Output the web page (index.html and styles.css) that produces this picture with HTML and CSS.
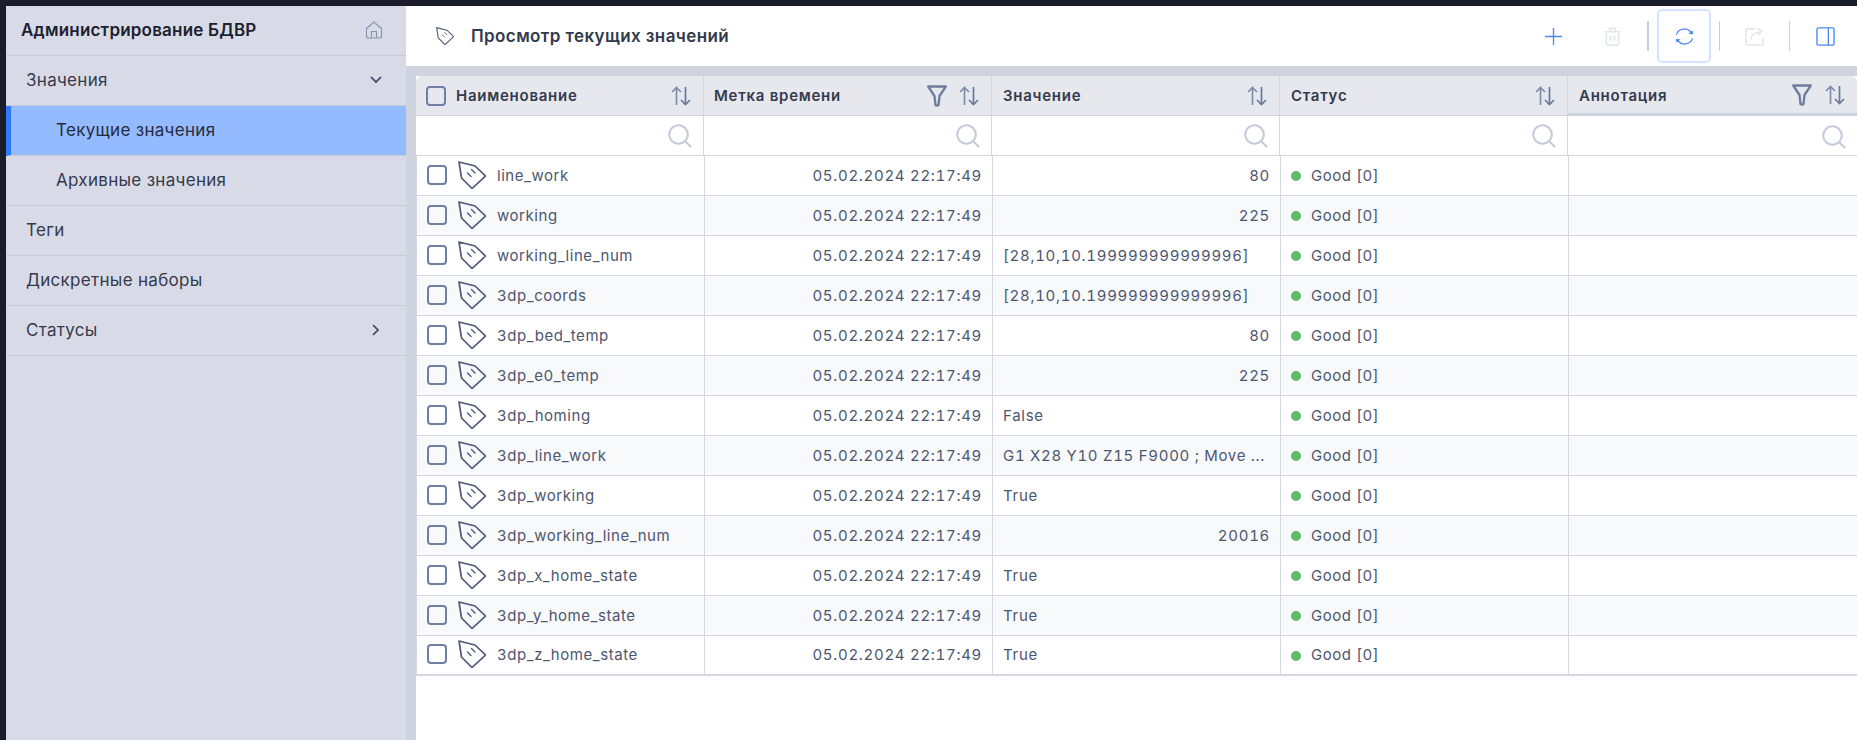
FILE: index.html
```html
<!DOCTYPE html>
<html lang="ru">
<head>
<meta charset="utf-8">
<title>Просмотр текущих значений</title>
<link rel="stylesheet" href="styles.css">
</head>
<body>
<svg class="defs" width="0" height="0" aria-hidden="true">
  <symbol id="tag" viewBox="0 0 28 28"><path d="M1 1 L17 5 L27.500 15 L14 27.500 L3.500 17 Z" fill="none" stroke="currentColor" stroke-width="1.700" stroke-linejoin="round"/><path d="M9.500 12 L13 15.500 M13.500 8.500 L17 12" fill="none" stroke="currentColor" stroke-width="1.400" stroke-linecap="round"/></symbol>
  <symbol id="sort" viewBox="0 0 20 20"><path d="M5.500 19 V1.500 M1 6 L5.500 1.500 L10 6" fill="none" stroke="#7e8cab" stroke-width="1.700"/><path d="M14.500 1 V18.500 M10 14 L14.500 18.500 L19 14" fill="none" stroke="#6a7a9c" stroke-width="1.700"/></symbol>
  <symbol id="search" viewBox="0 0 24 24"><circle cx="10.500" cy="10.500" r="9.300" fill="none" stroke="#c2c9dc" stroke-width="2"/><path d="M17 17 L23 23" stroke="#c2c9dc" stroke-width="2"/></symbol>
  <symbol id="funnel" viewBox="0 0 20 22"><path d="M1.200 1.500 H18.800 L12.500 11 L11.500 20 Q10 21 8.500 20 L7.500 11 Z" fill="none" stroke="#6f7c9b" stroke-width="2.300" stroke-linejoin="round"/></symbol>
</svg>
<div class="app">
  <aside class="sidebar">
    <div class="brand">
      <span class="brand-title">Администрирование БДВР</span>
      <svg class="home" viewBox="0 0 18 18"><path d="M1.500 7.500 L9 1 L16.500 7.500 V15 Q16.500 17 14.500 17 H3.500 Q1.500 17 1.500 15 Z M6.500 17 V10.500 H11.500 V17" fill="none" stroke="#8b93a8" stroke-width="1.100"/></svg>
    </div>
    <div class="nav-item"><span>Значения</span><svg class="chev" viewBox="0 0 12 8"><path d="M1 1 L6 6 L11 1" fill="none" stroke="#3f465a" stroke-width="1.700"/></svg></div>
    <div class="nav-item sub active"><span>Текущие значения</span></div>
    <div class="nav-item sub"><span>Архивные значения</span></div>
    <div class="nav-item"><span>Теги</span></div>
    <div class="nav-item"><span>Дискретные наборы</span></div>
    <div class="nav-item"><span>Статусы</span><svg class="chev right" viewBox="0 0 8 12"><path d="M1 1 L6 6 L1 11" fill="none" stroke="#3f465a" stroke-width="1.700"/></svg></div>
  </aside>
  <main class="main">
    <header class="topbar">
      <svg class="page-icon"><use href="#tag"/></svg>
      <h1 class="page-title">Просмотр текущих значений</h1>
      <div class="tools">
        <button class="tool t-add"><svg viewBox="0 0 20 20"><path d="M10 1 V19 M1 10 H19" stroke="#4c86f5" stroke-width="1.400"/></svg></button>
        <button class="tool t-del"><svg viewBox="0 0 20 20"><path d="M1.500 5 H18.500 M7 5 V1.500 H13 V5 M3.500 5 V17 Q3.500 19 5.500 19 H14.500 Q16.500 19 16.500 17 V5 M8 9 V14.500 M12 9 V14.500" fill="none" stroke="#e3e6ed" stroke-width="1.800"/></svg></button>
        <span class="sep thick"></span>
        <button class="tool t-refresh"><svg viewBox="0 0 20 20"><path d="M1.500 8 A8.700 8.700 0 0 1 17 6 M18.500 12 A8.700 8.700 0 0 1 3 14" fill="none" stroke="#4c86f5" stroke-width="1.300"/><path d="M14 7 L19 7.500 L18.500 3.500 Z M6 13 L1 12.500 L1.500 16.500 Z" fill="#4c86f5"/></svg></button>
        <span class="sep"></span>
        <button class="tool t-share"><svg viewBox="0 0 20 20"><path d="M10 2 H3 Q1 2 1 4 V17 Q1 19 3 19 H17 Q19 19 19 17 V11 M6 13 Q7 6 15 5.500 M12.500 1.500 L17.500 4.500 L13.500 9" fill="none" stroke="#e3e6ed" stroke-width="1.700"/></svg></button>
        <span class="sep"></span>
        <button class="tool t-panel"><svg viewBox="0 0 20 20"><rect x="1" y="1" width="18" height="18" rx="1.500" fill="none" stroke="#4c86f5" stroke-width="1.400"/><path d="M13 1 V19" stroke="#4c86f5" stroke-width="1.400"/></svg></button>
      </div>
    </header>
    <section class="content">
      <div class="table">
        <div class="thead">
          <div class="th"><span class="box head-box"></span><span class="th-label">Наименование</span><svg class="sort"><use href="#sort"/></svg></div>
          <div class="th"><span class="th-label">Метка времени</span><svg class="funnel"><use href="#funnel"/></svg><svg class="sort"><use href="#sort"/></svg></div>
          <div class="th"><span class="th-label">Значение</span><svg class="sort"><use href="#sort"/></svg></div>
          <div class="th"><span class="th-label">Статус</span><svg class="sort"><use href="#sort"/></svg></div>
          <div class="th"><span class="th-label">Аннотация</span><svg class="funnel"><use href="#funnel"/></svg><svg class="sort"><use href="#sort"/></svg></div>
        </div>
        <div class="tfilter">
          <div class="tf"><svg class="search"><use href="#search"/></svg></div>
          <div class="tf"><svg class="search"><use href="#search"/></svg></div>
          <div class="tf"><svg class="search"><use href="#search"/></svg></div>
          <div class="tf"><svg class="search"><use href="#search"/></svg></div>
          <div class="tf"><svg class="search"><use href="#search"/></svg></div>
        </div>
        <div class="row"><div class="td name"><span class="box"></span><svg class="tag"><use href="#tag"/></svg><span>line_work</span></div><div class="td num">05.02.2024 22:17:49</div><div class="td num">80</div><div class="td status"><i class="dot"></i>Good [0]</div><div class="td"></div></div>
        <div class="row"><div class="td name"><span class="box"></span><svg class="tag"><use href="#tag"/></svg><span>working</span></div><div class="td num">05.02.2024 22:17:49</div><div class="td num">225</div><div class="td status"><i class="dot"></i>Good [0]</div><div class="td"></div></div>
        <div class="row"><div class="td name"><span class="box"></span><svg class="tag"><use href="#tag"/></svg><span>working_line_num</span></div><div class="td num">05.02.2024 22:17:49</div><div class="td">[28,10,10.199999999999996]</div><div class="td status"><i class="dot"></i>Good [0]</div><div class="td"></div></div>
        <div class="row"><div class="td name"><span class="box"></span><svg class="tag"><use href="#tag"/></svg><span>3dp_coords</span></div><div class="td num">05.02.2024 22:17:49</div><div class="td">[28,10,10.199999999999996]</div><div class="td status"><i class="dot"></i>Good [0]</div><div class="td"></div></div>
        <div class="row"><div class="td name"><span class="box"></span><svg class="tag"><use href="#tag"/></svg><span>3dp_bed_temp</span></div><div class="td num">05.02.2024 22:17:49</div><div class="td num">80</div><div class="td status"><i class="dot"></i>Good [0]</div><div class="td"></div></div>
        <div class="row"><div class="td name"><span class="box"></span><svg class="tag"><use href="#tag"/></svg><span>3dp_e0_temp</span></div><div class="td num">05.02.2024 22:17:49</div><div class="td num">225</div><div class="td status"><i class="dot"></i>Good [0]</div><div class="td"></div></div>
        <div class="row"><div class="td name"><span class="box"></span><svg class="tag"><use href="#tag"/></svg><span>3dp_homing</span></div><div class="td num">05.02.2024 22:17:49</div><div class="td">False</div><div class="td status"><i class="dot"></i>Good [0]</div><div class="td"></div></div>
        <div class="row"><div class="td name"><span class="box"></span><svg class="tag"><use href="#tag"/></svg><span>3dp_line_work</span></div><div class="td num">05.02.2024 22:17:49</div><div class="td">G1 X28 Y10 Z15 F9000 ; Move ...</div><div class="td status"><i class="dot"></i>Good [0]</div><div class="td"></div></div>
        <div class="row"><div class="td name"><span class="box"></span><svg class="tag"><use href="#tag"/></svg><span>3dp_working</span></div><div class="td num">05.02.2024 22:17:49</div><div class="td">True</div><div class="td status"><i class="dot"></i>Good [0]</div><div class="td"></div></div>
        <div class="row"><div class="td name"><span class="box"></span><svg class="tag"><use href="#tag"/></svg><span>3dp_working_line_num</span></div><div class="td num">05.02.2024 22:17:49</div><div class="td num">20016</div><div class="td status"><i class="dot"></i>Good [0]</div><div class="td"></div></div>
        <div class="row"><div class="td name"><span class="box"></span><svg class="tag"><use href="#tag"/></svg><span>3dp_x_home_state</span></div><div class="td num">05.02.2024 22:17:49</div><div class="td">True</div><div class="td status"><i class="dot"></i>Good [0]</div><div class="td"></div></div>
        <div class="row"><div class="td name"><span class="box"></span><svg class="tag"><use href="#tag"/></svg><span>3dp_y_home_state</span></div><div class="td num">05.02.2024 22:17:49</div><div class="td">True</div><div class="td status"><i class="dot"></i>Good [0]</div><div class="td"></div></div>
        <div class="row last"><div class="td name"><span class="box"></span><svg class="tag"><use href="#tag"/></svg><span>3dp_z_home_state</span></div><div class="td num">05.02.2024 22:17:49</div><div class="td">True</div><div class="td status"><i class="dot"></i>Good [0]</div><div class="td"></div></div>
      </div>
    </section>
  </main>
</div>
</body>
</html>
```
FILE: styles.css
```css
* { box-sizing: border-box; }
html, body { margin: 0; height: 100%; overflow: hidden; }
body { background: #1a1d29; font-family: Inter, "Noto Sans", sans-serif; padding: 6px 0 0 6px; height: 740px; }
.defs { position: absolute; }
.app { display: flex; height: 734px; }

.sidebar { width: 400px; flex: none; background: #d8dbe7; }
.brand { height: 50px; display: flex; align-items: center; justify-content: space-between; padding: 0 23px 2px 15px; border-bottom: 1px solid #c5c9d8; }
.brand-title { font-size: 17px; letter-spacing: .2px; font-weight: 600; color: #1c2130; }
.home { width: 18px; height: 18px; }
.nav-item { height: 50px; display: flex; align-items: center; justify-content: space-between; padding: 0 24px 2px 20px; border-bottom: 1px solid #c5c9d8; font-size: 17px; letter-spacing: .3px; color: #343a4d; }
.nav-item.sub { padding-left: 50px; }
.nav-item.active { background: #94bbff; border-left: 5px solid #2f7bff; padding-left: 45px; color: #262c40; }
.chev { width: 12px; height: 8px; }
.chev.right { width: 8px; height: 12px; margin-right: 2px; }

.main { flex: 1; display: flex; flex-direction: column; min-width: 0; background: #fff; }
.topbar { height: 60px; flex: none; display: flex; align-items: center; padding: 0 0 0 30px; }
.page-icon { width: 18px; height: 18px; color: #4f5a78; margin-top: -1px; flex: none; }
.page-title { margin: 0 0 0 17px; font-size: 17px; letter-spacing: .4px; font-weight: 600; color: #343a4d; }
.tools { margin-left: auto; display: flex; align-items: center; padding-right: 22px; }
.tool { border: 0; background: none; padding: 0; display: flex; align-items: center; justify-content: center; }
.tool svg { width: 19px; height: 19px; display: block; }
.t-add { margin-right: 40px; }
.t-del { margin-right: 25px; }
.t-refresh { width: 54px; height: 54px; border: 2px solid #d4e3ff; border-radius: 5px; margin: 0 8px 0 8px; }
.t-share { margin: 0 25px 0 25px; }
.t-panel { margin-left: 26px; }
.sep { width: 1px; height: 30px; background: #cbcfdb; }
.sep.thick { width: 2px; }

.content { flex: 1; background: #fff; border-top: 10px solid #cfd3de; border-left: 10px solid #cfd3de; }
.table { display: block; }
.thead, .tfilter, .row { display: grid; grid-template-columns: 288px 288px 288px 288px 1fr; }
.thead { height: 40px; border-bottom: 1px solid #cdd1de; background: #e6e8ee; border-radius: 6px 6px 0 0; }
.th { display: flex; align-items: center; padding: 0 12px 0 10px; border-right: 1px solid #d4d8e3; gap: 12px; font-size: 15px; letter-spacing: .75px; font-weight: 600; color: #343a4d; }
.th:first-child { padding-left: 10px; gap: 0; }
.th:nth-child(3), .th:nth-child(4) { padding-left: 11px; }
.th:last-child { border-right: 0; border-bottom: 2px solid #cdd1de; padding: 1px 12px 0 11px; gap: 13px; }
.th-label { margin-right: auto; }
.head-box { margin-right: 10px; }
.sort { width: 20px; height: 20px; flex: none; }
.funnel { width: 20px; height: 22px; flex: none; }
.tfilter { height: 40px; border-bottom: 1px solid #d4d8e3; }
.tf { display: flex; align-items: center; justify-content: flex-end; padding-right: 11px; border-right: 1px solid #d4d8e3; }
.tf:last-child { border-right: 0; padding-top: 2px; }
.search { width: 24px; height: 24px; }
.row { height: 40px; border-bottom: 1px solid #d4d8e3; border-left: 1px solid #d4d8e3; }
.row:nth-of-type(even) { background: #f8f9fb; }
.row.last { border-bottom-width: 2px; }
.td { display: flex; align-items: center; min-width: 0; padding: 0 10px 1px; border-right: 1px solid #d4d8e3; font-size: 15px; letter-spacing: .7px; font-variant-numeric: tabular-nums; color: #4d566f; white-space: nowrap; overflow: hidden; }
.td:last-child { border-right: 0; }
.td.num { justify-content: flex-end; }
.name { padding: 0 10px; letter-spacing: .55px; }
.name span:last-child { margin-bottom: 1px; }
.box { width: 20px; height: 20px; flex: none; border: 2px solid #6f7fa3; border-radius: 4px; display: block; background: transparent; }
.name .box { margin-top: -2px; }
.tag { width: 28px; height: 28px; margin-left: 11px; margin-right: 11px; color: #4f5a78; flex: none; margin-top: -2px; }
.status { padding-left: 10px; letter-spacing: .55px; }
.dot { width: 10px; height: 10px; border-radius: 50%; background: #5fbb65; margin: 2px 10px 0 0; flex: none; }
```
